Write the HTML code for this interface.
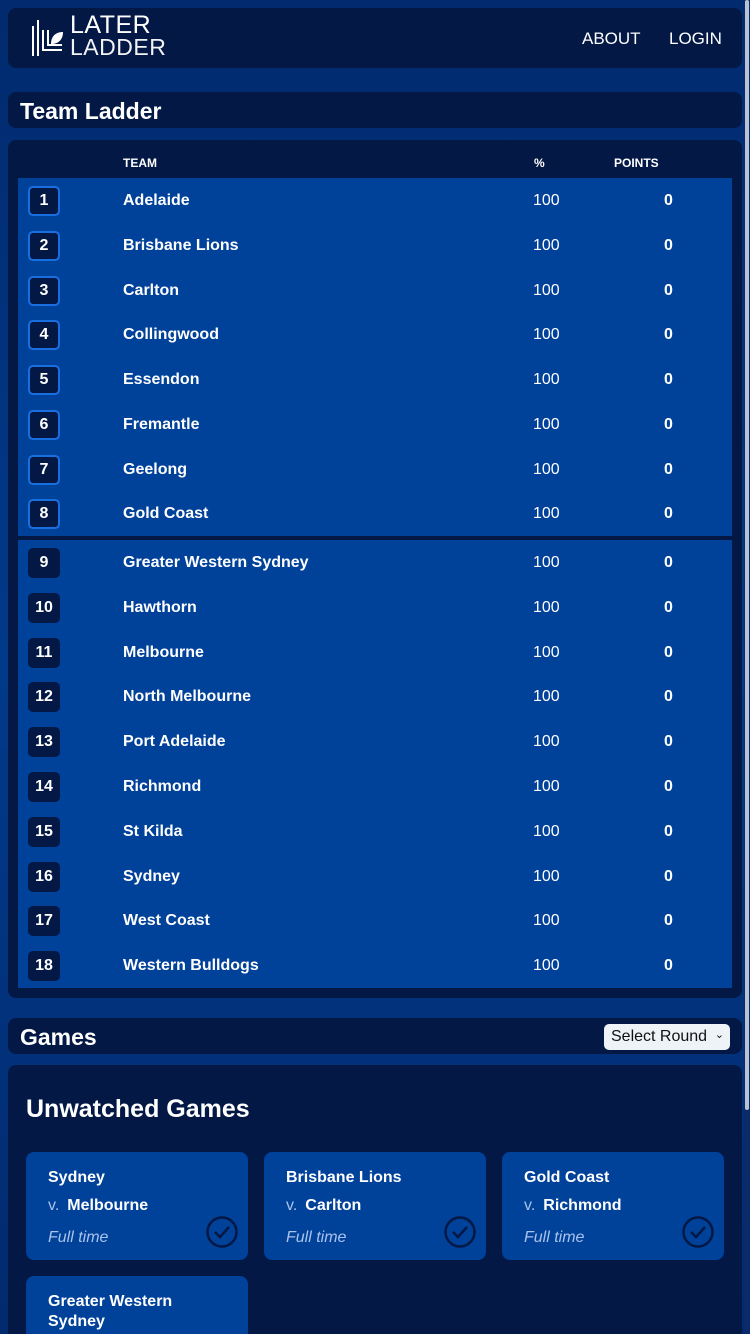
<!DOCTYPE html>
<html style="width:750px;height:1334px;overflow:hidden"><head><meta charset="utf-8"><style>
*{box-sizing:border-box;margin:0;padding:0}
body{width:750px;height:1334px;overflow:hidden;background:linear-gradient(180deg,#022a6e 0%,#013a8a 50%,#022a6e 100%);font-family:"Liberation Sans",sans-serif;color:#fff;position:relative}
.box{position:absolute;left:8px;width:734px;background:#031845;border-radius:8px}
.hdr{top:8px;height:60px}
.nav{position:absolute;top:29px;font-size:17px}
.bar{height:36px;font-weight:bold;font-size:23px;padding:6px 12px}
.row{position:absolute;left:18px;width:714px;height:45px;background:#00419a;font-weight:bold;font-size:16px}
.num{position:absolute;left:10px;top:8px;width:32px;height:30px;border-radius:5px;background:#031845;text-align:center;line-height:30px;font-size:16px}
.hi .num{border:2px solid #1a6fe0;line-height:26px}
.tn{position:absolute;left:105px;top:14px}
.pc{position:absolute;left:515px;top:14px;font-weight:normal}
.pt{position:absolute;left:646px;top:14px}
.card{position:absolute;width:222px;height:108px;background:#00419a;border-radius:8px;font-weight:bold;font-size:16px}
.card .a{position:absolute;left:22px;top:17px}
.card .b{position:absolute;left:22px;top:45px}
.card .b i{font-style:normal;font-weight:normal;color:#a9c3ec;margin-right:8px}
.card .c{position:absolute;left:22px;top:77px;font-style:italic;font-weight:normal;color:#a9c3ec}
.card svg{position:absolute;left:180px;top:64px}
</style></head><body>
<div class="box hdr"></div>
<svg style="position:absolute;left:32px;top:16px" width="32" height="40" viewBox="0 0 32 40"><g fill="none" stroke="#fff" stroke-width="2"><path d="M1 10V40M6 4V40M11 14V34H30"/><path d="M16 14V29H30"/></g><path d="M19 28c0-8 5-12 12-12c0 8-5 12-12 12z" fill="#fff"/></svg>
<div style="position:absolute;left:70px;top:14px;font-size:25px;line-height:22px;letter-spacing:0.5px">LATER<br><span style="font-weight:normal;font-size:23px;opacity:.95">LADDER</span></div>
<div class="nav" style="left:582px">ABOUT</div>
<div class="nav" style="left:669px">LOGIN</div>
<div class="box bar" style="top:92px">Team Ladder</div>
<div class="box" style="top:140px;height:858px"></div>
<div style="position:absolute;top:156px;left:123px;font-size:12px;font-weight:bold">TEAM</div>
<div style="position:absolute;top:156px;left:534px;font-size:12px;font-weight:bold">%</div>
<div style="position:absolute;top:156px;left:614px;font-size:12px;font-weight:bold">POINTS</div>
<div id="rows"></div>
<div class="box bar" style="top:1018px">Games</div>
<div style="position:absolute;left:604px;top:1024px;width:126px;height:26px;background:#eef3f8;border-radius:5px;color:#111;font-size:16px;padding:4px 7px">Select Round <span style="position:absolute;right:6px;top:4px;font-size:11px">&#8964;</span></div>
<div class="box" style="top:1065px;height:269px;border-radius:8px 8px 0 0"></div>
<div style="position:absolute;left:26px;top:1095px;font-size:25px;font-weight:bold">Unwatched Games</div>
<div class="card" style="left:26px;top:1152px"><div class="a">Sydney</div><div class="b"><i>v.</i>Melbourne</div><div class="c">Full time</div><svg width="32" height="32"><circle cx="16" cy="16" r="14.5" fill="none" stroke="#031845" stroke-width="2.5"/><path d="M9 16l5 5 9-10" fill="none" stroke="#031845" stroke-width="2.5"/></svg></div>
<div class="card" style="left:264px;top:1152px"><div class="a">Brisbane Lions</div><div class="b"><i>v.</i>Carlton</div><div class="c">Full time</div><svg width="32" height="32"><circle cx="16" cy="16" r="14.5" fill="none" stroke="#031845" stroke-width="2.5"/><path d="M9 16l5 5 9-10" fill="none" stroke="#031845" stroke-width="2.5"/></svg></div>
<div class="card" style="left:502px;top:1152px"><div class="a">Gold Coast</div><div class="b"><i>v.</i>Richmond</div><div class="c">Full time</div><svg width="32" height="32"><circle cx="16" cy="16" r="14.5" fill="none" stroke="#031845" stroke-width="2.5"/><path d="M9 16l5 5 9-10" fill="none" stroke="#031845" stroke-width="2.5"/></svg></div>
<div class="card" style="left:26px;top:1276px;height:58px;border-radius:8px 8px 0 0"><div class="a" style="line-height:20px;top:16px">Greater Western<br>Sydney</div></div>
<div style="position:absolute;right:0;top:0;width:6px;height:1334px;background:#0a2a6a"></div>
<div style="position:absolute;right:1px;top:0;width:4px;height:1110px;background:#b8c2d4;border-radius:2px"></div>
<script>
(function(){
var t=["Adelaide","Brisbane Lions","Carlton","Collingwood","Essendon","Fremantle","Geelong","Gold Coast","Greater Western Sydney","Hawthorn","Melbourne","North Melbourne","Port Adelaide","Richmond","St Kilda","Sydney","West Coast","Western Bulldogs"];
var h="";
for(var i=0;i<18;i++){var y=i<8?178+i*44.75:540+(i-8)*44.8;var ht=i<8?(i==7?536-y:45):(i==17?988-y:45);
h+='<div class="row'+(i<8?' hi':'')+'" style="top:'+y+'px;height:'+ht+'px"><div class="num">'+(i+1)+'</div><div class="tn">'+t[i]+'</div><div class="pc">100</div><div class="pt">0</div></div>';}
document.getElementById("rows").innerHTML=h;
})();
</script>
</body></html>
